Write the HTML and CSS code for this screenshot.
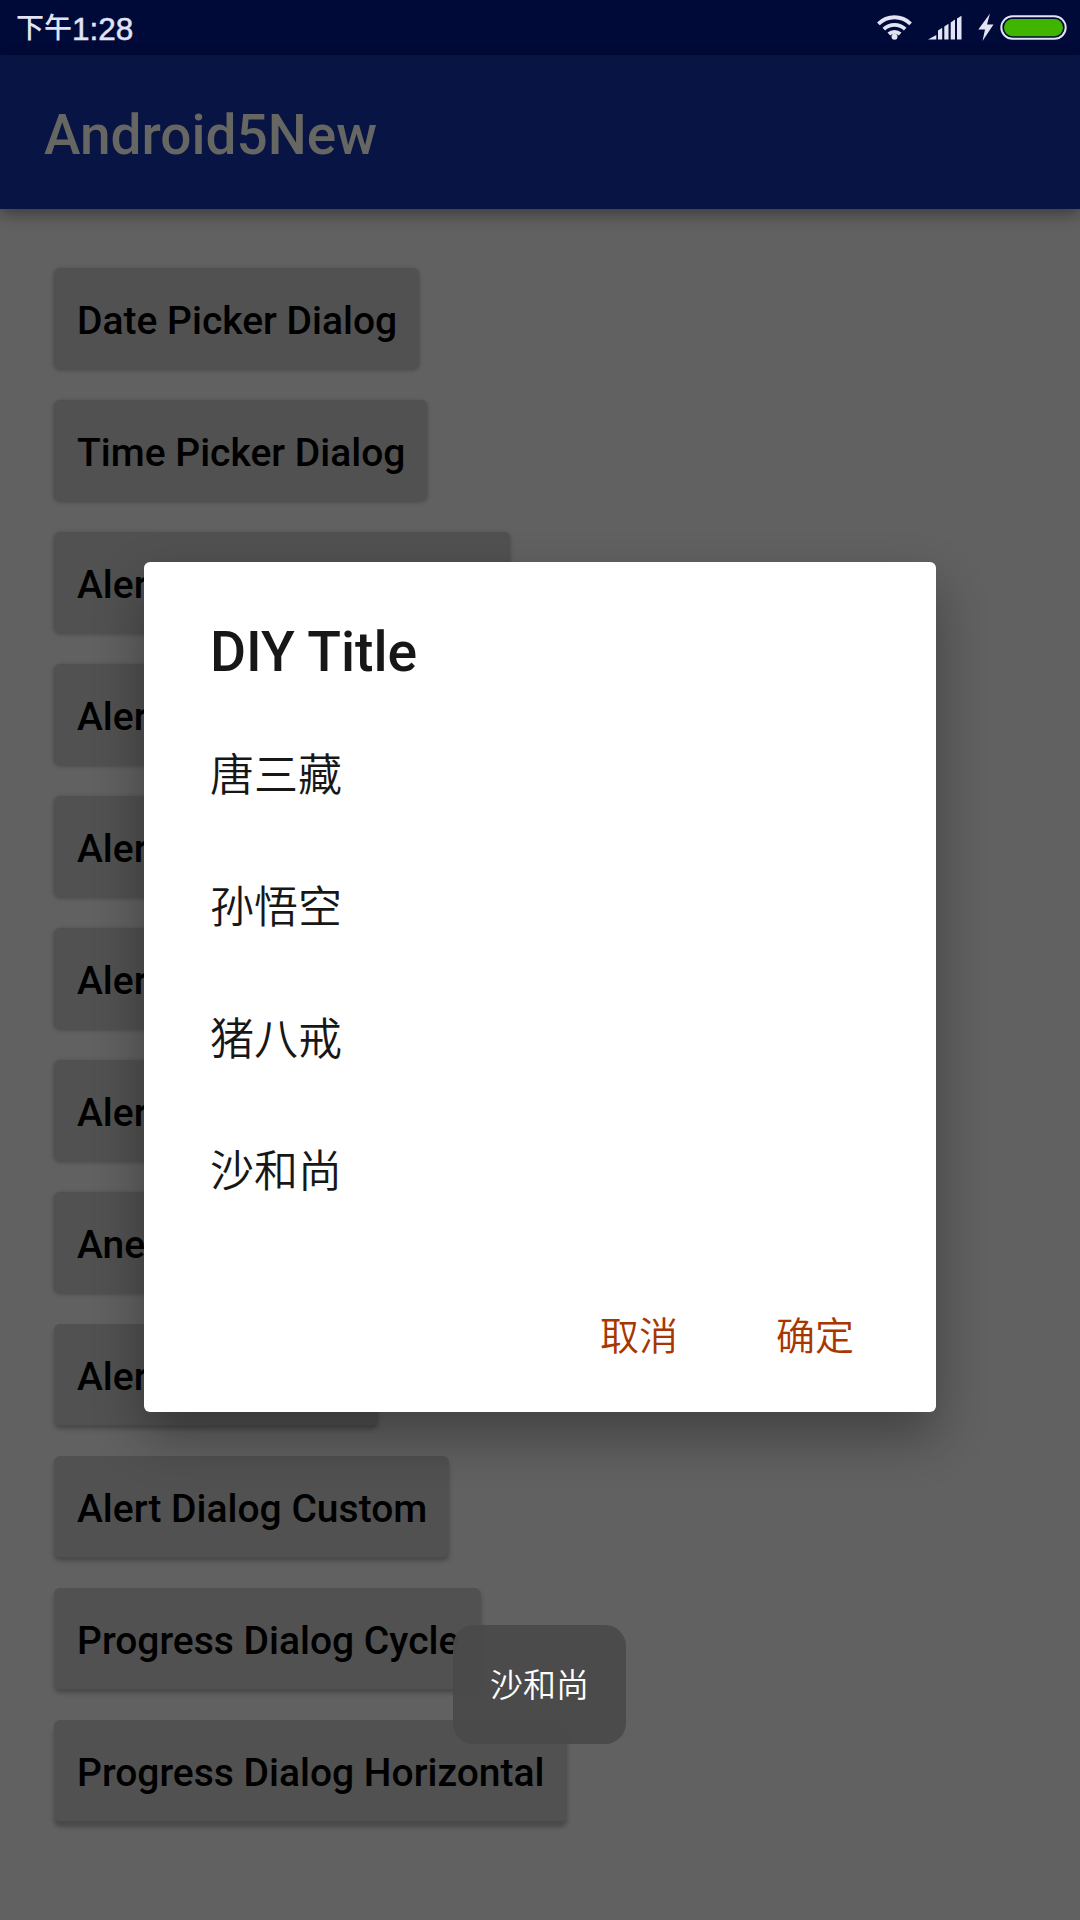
FILE: index.html
```html
<!DOCTYPE html>
<html lang="zh-CN">
<head>
<meta charset="utf-8">
<title>Android5New</title>
<link rel="stylesheet" href="styles.css">
</head>
<body>
<div class="screen">
  <header class="status-bar">
    <div class="clock"><span class="clock-period">下午</span><span class="clock-time">1:28</span></div>
    <svg class="status-icons" width="200" height="55" viewBox="0 0 200 55">
      <g fill="none" stroke="#e2e3f4" stroke-width="3.8">
        <path d="M3.400 23.800a23 23 0 0 1 32.200 0"/>
        <path d="M8.800 29.200a15.500 15.500 0 0 1 21.400 0"/>
        <path d="M13.800 34a8.500 8.500 0 0 1 11.400 0"/>
      </g>
      <g fill="#e2e3f4">
        <circle cx="19.500" cy="36.800" r="3"/>
        <path d="M53 39.500 61.300 35V39.500zM63 30.500l4.200-2.700V39.500H63zM69.300 26.500l4.200-2.700V39.500h-4.200zM75.700 22.500l4.300-2.900V39.500h-4.300zM82 18.600l4.500-2.800V39.500H82z"/>
        <path d="M115 13.500 103.300 29.500H110l-2.500 11.500L118.500 24.500h-6.500z"/>
      </g>
      <rect x="126.300" y="16.300" width="64.400" height="22.500" rx="11.250" fill="none" stroke="#e2e3f4" stroke-width="2"/>
      <rect x="129" y="19" width="59" height="17.200" rx="8.500" fill="#3fb500"/>
    </svg>
  </header>
  <div class="app-bar"><h1 class="app-title">Android5New</h1></div>
  <main class="content">
    <div class="btn">Date Picker Dialog</div>
    <div class="btn">Time Picker Dialog</div>
    <div class="btn btn-wide">Alert Dialog</div>
    <div class="btn">Alert Dialog</div>
    <div class="btn">Alert Dialog</div>
    <div class="btn">Alert Dialog</div>
    <div class="btn">Alert Dialog</div>
    <div class="btn">Anert Dialog</div>
    <div class="btn btn-medium low">Alert Dialog</div>
    <div class="btn low">Alert Dialog Custom</div>
    <div class="btn low">Progress Dialog Cycle</div>
    <div class="btn lowest">Progress Dialog Horizontal</div>
  </main>
  <section class="dialog">
    <h2 class="dialog-title">DIY Title</h2>
    <ul class="options">
      <li class="option">唐三藏</li>
      <li class="option">孙悟空</li>
      <li class="option">猪八戒</li>
      <li class="option">沙和尚</li>
    </ul>
    <div class="actions">
      <span class="action">取消</span>
      <span class="action">确定</span>
    </div>
  </section>
  <div class="toast">沙和尚</div>
</div>
</body>
</html>
```
FILE: styles.css
```css
* {
  box-sizing: border-box;
}

body {
  margin: 0;
  font-family: Roboto, "Noto Sans CJK SC", sans-serif;
}

.screen {
  position: relative;
  display: flex;
  flex-direction: column;
  width: 1080px;
  height: 1920px;
  overflow: hidden;
  background: #616161;
}

.status-bar {
  display: flex;
  justify-content: space-between;
  height: 55px;
  padding: 0 5px 0 16px;
  background: #000a38;
  color: #e2e3f4;
}

.status-icons {
  overflow: visible;
}

.clock {
  display: flex;
  align-items: center;
  height: 58px;
}

.clock-period {
  font-size: 28px;
  font-weight: 500;
  line-height: 58px;
}

.clock-time {
  font-family: "Liberation Sans", sans-serif;
  font-size: 31.5px;
  line-height: 58px;
  -webkit-text-stroke: .5px #e2e3f4;
}

.app-bar {
  display: flex;
  align-items: center;
  height: 154px;
  padding-left: 44px;
  background: #081443;
  box-shadow: 0 4px 16px rgba(0, 0, 0, .42);
}

.app-title {
  margin: 0;
  padding-top: 6px;
  color: #666663;
  font-size: 55px;
  font-weight: 500;
  line-height: 64px;
}

.content {
  display: flex;
  flex-direction: column;
  align-items: flex-start;
  gap: 31px;
  padding: 59px 54px 0;
}

.btn {
  height: 101px;
  padding: 0 22px 0 23px;
  border-radius: 6px;
  background: #515151;
  box-shadow: 0 1px 4px rgba(0, 0, 0, .28);
  color: #000;
  font-size: 39px;
  font-weight: 500;
  line-height: 106px;
  white-space: nowrap;
}

.btn-wide {
  width: 456px;
}

.btn-medium {
  width: 324px;
}

.low {
  box-shadow: 0 4px 4px rgba(0, 0, 0, .25);
}

.lowest {
  box-shadow: 0 6px 4px rgba(0, 0, 0, .25);
}

.dialog {
  position: absolute;
  top: 562px;
  left: 144px;
  display: flex;
  flex-direction: column;
  width: 792px;
  height: 850px;
  padding: 59px 66px 0;
  border-radius: 6px;
  background: #fff;
  box-shadow: 0 24px 52px rgba(0, 0, 0, .33);
  color: #171717;
}

.dialog-title {
  margin: 0 0 25px;
  font-size: 55.3px;
  font-weight: 500;
  line-height: 64px;
}

.options {
  margin: 0;
  padding: 0;
  list-style: none;
}

.option {
  height: 132px;
  font-size: 44px;
  font-weight: 350;
  line-height: 132px;
}

.actions {
  display: flex;
  justify-content: flex-end;
  gap: 98px;
  padding: 69px 16px 0 0;
}

.action {
  color: #a83600;
  font-size: 39px;
  font-weight: 350;
  line-height: 60px;
}

.toast {
  position: absolute;
  top: 1625px;
  left: 453px;
  width: 173px;
  height: 119px;
  border-radius: 21px;
  background: rgba(74, 74, 74, .96);
  color: #fff;
  font-size: 33px;
  font-weight: 350;
  line-height: 121px;
  text-align: center;
}
```
